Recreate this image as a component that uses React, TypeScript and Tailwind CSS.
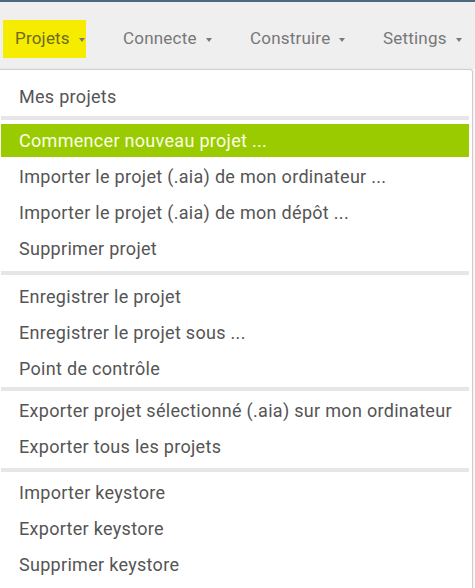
import React from "react";

const Arrow = () => (
  <svg width="6" height="4" viewBox="0 0 6 4" className="ml-[9px] mt-[1px] shrink-0">
    <path d="M0 0 L6 0 L3 4 Z" fill="#7a7a7a" />
  </svg>
);

const Row = ({ label }: { label: string }) => (
  <div className="h-[36px] flex items-center pl-[19px] text-[18px] tracking-[0.3px] text-[#555555] whitespace-nowrap">
    {label}
  </div>
);

const Sep = () => <div className="h-[4px] bg-[#e6e6e6] ml-[1px] mr-[3px]" />;

export default function App() {
  return (
    <div
      className="w-[475px] h-[588px] overflow-hidden bg-white flex flex-col"
      style={{ fontFamily: "Roboto, 'Liberation Sans', sans-serif" }}
    >
      <div className="h-[2px] bg-[#4b6a7e]" />
      <div className="h-[67px] bg-[#efefef] flex items-start pt-[18px] text-[17px] tracking-[0.2px] text-[#777777]">
        <div className="ml-[3px] w-[83px] h-[38px] bg-[#f6ec00] flex items-center pl-[12px] text-[#6e6a1a]">
          <span>Projets</span>
          <Arrow />
        </div>
        <div className="ml-[37px] w-[127px] h-[38px] flex items-center">
          <span>Connecte</span>
          <Arrow />
        </div>
        <div className="w-[133px] h-[38px] flex items-center">
          <span>Construire</span>
          <Arrow />
        </div>
        <div className="h-[38px] flex items-center">
          <span>Settings</span>
          <Arrow />
        </div>
      </div>
      <div className="flex-1 w-[473px] border-t border-r border-[#cfcfcf] rounded-tr-[3px] bg-white shadow-[1px_0_2px_rgba(0,0,0,0.08)]">
        <div className="pt-[8px] pb-[2px]">
          <Row label="Mes projets" />
        </div>
        <Sep />
        <div className="pt-[2px] pb-[5px]">
          <div className="mt-[2px] mb-[1px] h-[33px] bg-[#99cb00] ml-[1px] mr-[3px] flex items-center pl-[18px] text-[18px] tracking-[0.3px] text-[#fbffe8] whitespace-nowrap">
            Commencer nouveau projet ...
          </div>
          <Row label="Importer le projet (.aia) de mon ordinateur ..." />
          <Row label="Importer le projet (.aia) de mon dépôt ..." />
          <Row label="Supprimer projet" />
        </div>
        <Sep />
        <div className="pt-[3px] pb-[1px]">
          <Row label="Enregistrer le projet" />
          <Row label="Enregistrer le projet sous ..." />
          <Row label="Point de contrôle" />
        </div>
        <Sep />
        <div className="pt-[1px] pb-[4px]">
          <Row label="Exporter projet sélectionné (.aia) sur mon ordinateur" />
          <Row label="Exporter tous les projets" />
        </div>
        <Sep />
        <div className="pt-[2px]">
          <Row label="Importer keystore" />
          <Row label="Exporter keystore" />
          <Row label="Supprimer keystore" />
        </div>
      </div>
    </div>
  );
}
